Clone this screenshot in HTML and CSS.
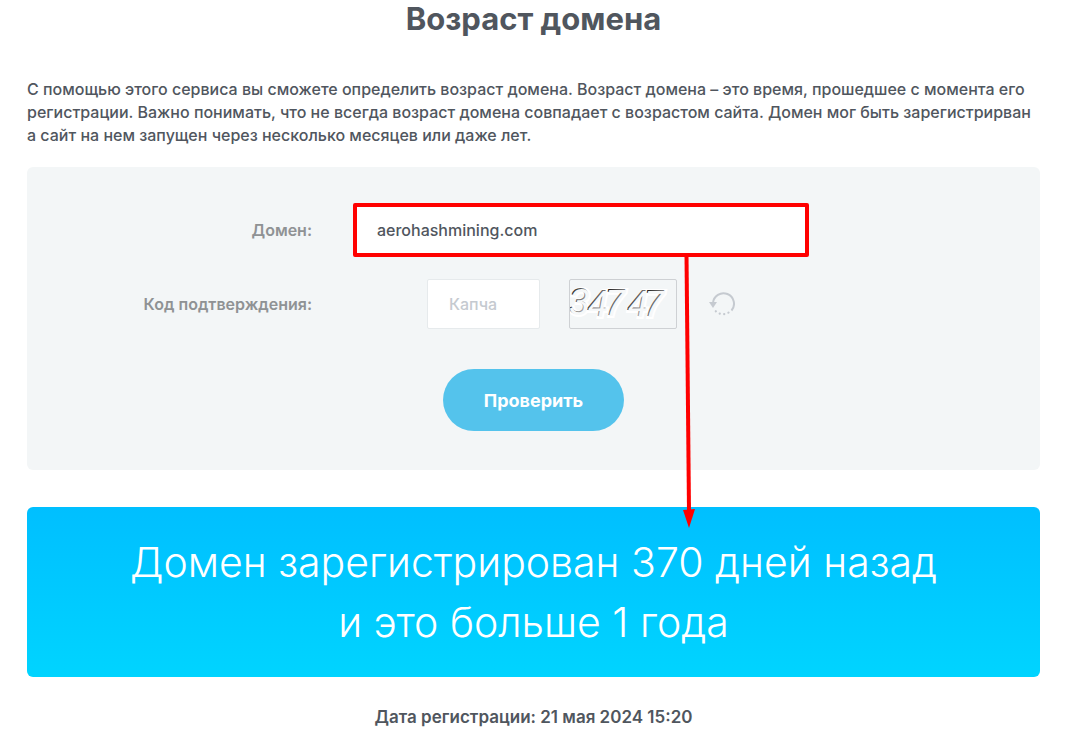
FILE: index.html
```html
<!DOCTYPE html>
<html lang="ru">
<head>
  <meta charset="UTF-8">
  <meta name="viewport" content="width=device-width, initial-scale=1.0">
  <title>Возраст домена</title>
  <link rel="stylesheet" href="styles.css">
</head>
<body>
  <main>
    <h1>Возраст домена</h1>
    <p class="intro">С помощью этого сервиса вы сможете определить возраст домена. Возраст домена – это время, прошедшее с момента его регистрации. Важно понимать, что не всегда возраст домена совпадает с возрастом сайта. Домен мог быть зарегистрирван а сайт на нем запущен через несколько месяцев или даже лет.</p>

    <form class="form-box">
      <div class="row">
        <label for="domain">Домен:</label>
        <div class="domain-field">
          <input type="text" id="domain" value="aerohashmining.com">
          <svg class="arrow" width="16" height="274" viewBox="0 0 16 274" aria-hidden="true">
            <path d="M5.500 0L8 256" stroke="#f00" stroke-width="4"/>
            <path d="M2 255L14 254L8 273Z" fill="#f00"/>
          </svg>
        </div>
      </div>
      <div class="row">
        <label for="captcha">Код подтверждения:</label>
        <div class="captcha">
          <input type="text" id="captcha" placeholder="Капча">
          <svg class="captcha-code" viewBox="0 0 106 48" role="img" aria-label="34747">
            <defs>
              <linearGradient id="ink" x1="0" y1="0" x2="1" y2="1">
                <stop offset="0.2" stop-color="#222"/>
                <stop offset="0.8" stop-color="#bbb"/>
              </linearGradient>
            </defs>
            <g class="digits glow">
              <text x="-1" y="35">3</text>
              <text x="18" y="37">4</text>
              <text x="35" y="36">7</text>
              <text x="58" y="37">4</text>
              <text x="74" y="37">7</text>
            </g>
            <g class="digits ink">
              <text x="-2" y="34">3</text>
              <text x="17" y="36">4</text>
              <text x="34" y="35">7</text>
              <text x="57" y="36">4</text>
              <text x="73" y="36">7</text>
            </g>
            <g class="digits face">
              <text x="-1" y="35">3</text>
              <text x="18" y="37">4</text>
              <text x="35" y="36">7</text>
              <text x="58" y="37">4</text>
              <text x="74" y="37">7</text>
            </g>
          </svg>
          <button type="button" class="refresh" aria-label="Обновить код">
            <svg width="26" height="26" viewBox="0 0 26 26" fill="none" stroke="#c5cad0" stroke-width="2">
              <path d="M4 12A10.500 10.500 0 1 1 22.500 19.500"/>
              <path d="M19.500 21.600A10.500 10.500 0 0 1 5 18" stroke-width="2.200" stroke-linecap="round" stroke-dasharray="0.100 4.400"/>
              <path d="M0 11L8 11L4 17Z" fill="#c5cad0" stroke="none"/>
            </svg>
          </button>
        </div>
      </div>
      <button type="submit" class="submit">Проверить</button>
    </form>

    <div class="result">Домен зарегистрирован 370 дней назад<br>и это больше 1 года</div>
    <p class="date">Дата регистрации: 21 мая 2024 15:20</p>
  </main>
</body>
</html>
```
FILE: styles.css
```css
* {
  box-sizing: border-box;
}
body {
  margin: 0;
  background: #fff;
  color: #50565e;
  font-family: Inter, "Open Sans", sans-serif;
}
main {
  padding: 0 30px 0 27px;
}
h1 {
  margin: 0 0 40px;
  font-size: 31px;
  line-height: 38px;
  font-weight: 700;
  text-align: center;
}
.intro {
  margin: 0 0 20px;
  font-size: 16px;
  line-height: 23px;
  font-weight: 500;
}
.form-box {
  padding: 36px 0 39px;
  margin-bottom: 37px;
  background: #f3f6f7;
  border-radius: 6px;
}
.row {
  display: grid;
  grid-template-columns: 285fr 456fr 190fr;
  column-gap: 41px;
  align-items: center;
  margin-bottom: 22px;
}
.row label {
  text-align: right;
  font-size: 16px;
  font-weight: 600;
  color: #8f9294;
}
input {
  font-family: inherit;
  font-size: 16px;
  font-weight: 500;
  color: #50565e;
  background: #fff;
  outline: none;
}
.domain-field {
  position: relative;
}
.domain-field input {
  display: block;
  width: 100%;
  height: 54px;
  padding: 0 20px;
  border: 4px solid #f00;
  border-radius: 2px;
}
.arrow {
  position: absolute;
  top: 52px;
  left: 72%;
  z-index: 1;
}
.captcha {
  display: flex;
  align-items: center;
  justify-content: center;
}
.captcha input {
  width: 113px;
  height: 50px;
  padding: 0 21px;
  border: 1px solid #e6eaec;
  border-radius: 2px;
}
.captcha input::placeholder {
  color: #c5cad0;
}
.captcha-code {
  width: 108px;
  height: 50px;
  margin: 0 32px 0 29px;
  border: 1px solid #ced1d4;
  border-radius: 2px;
}
.digits {
  font-family: "Liberation Sans", sans-serif;
  font-size: 36px;
  font-style: italic;
}
.glow {
  fill: #fff;
  stroke: #fff;
  stroke-width: 4px;
}
.ink {
  fill: url(#ink);
}
.face {
  fill: #f6f8f9;
}
.refresh {
  padding: 0;
  border: 0;
  background: none;
  cursor: pointer;
}
.refresh svg {
  display: block;
}
.submit {
  display: block;
  height: 62px;
  margin: 40px auto 0;
  padding: 0 41px;
  border: 0;
  border-radius: 31px;
  background: #54c3ec;
  color: #fff;
  font-family: inherit;
  font-size: 18px;
  font-weight: 700;
  cursor: pointer;
}
.result {
  padding: 25px 20px;
  border-radius: 6px;
  background: linear-gradient(#00bfff, #00d4ff);
  color: #fff;
  font-size: 41px;
  line-height: 60px;
  font-weight: 300;
  text-align: center;
}
.date {
  margin: 28px 0 0;
  font-size: 17px;
  line-height: 24px;
  font-weight: 600;
  text-align: center;
}
```
